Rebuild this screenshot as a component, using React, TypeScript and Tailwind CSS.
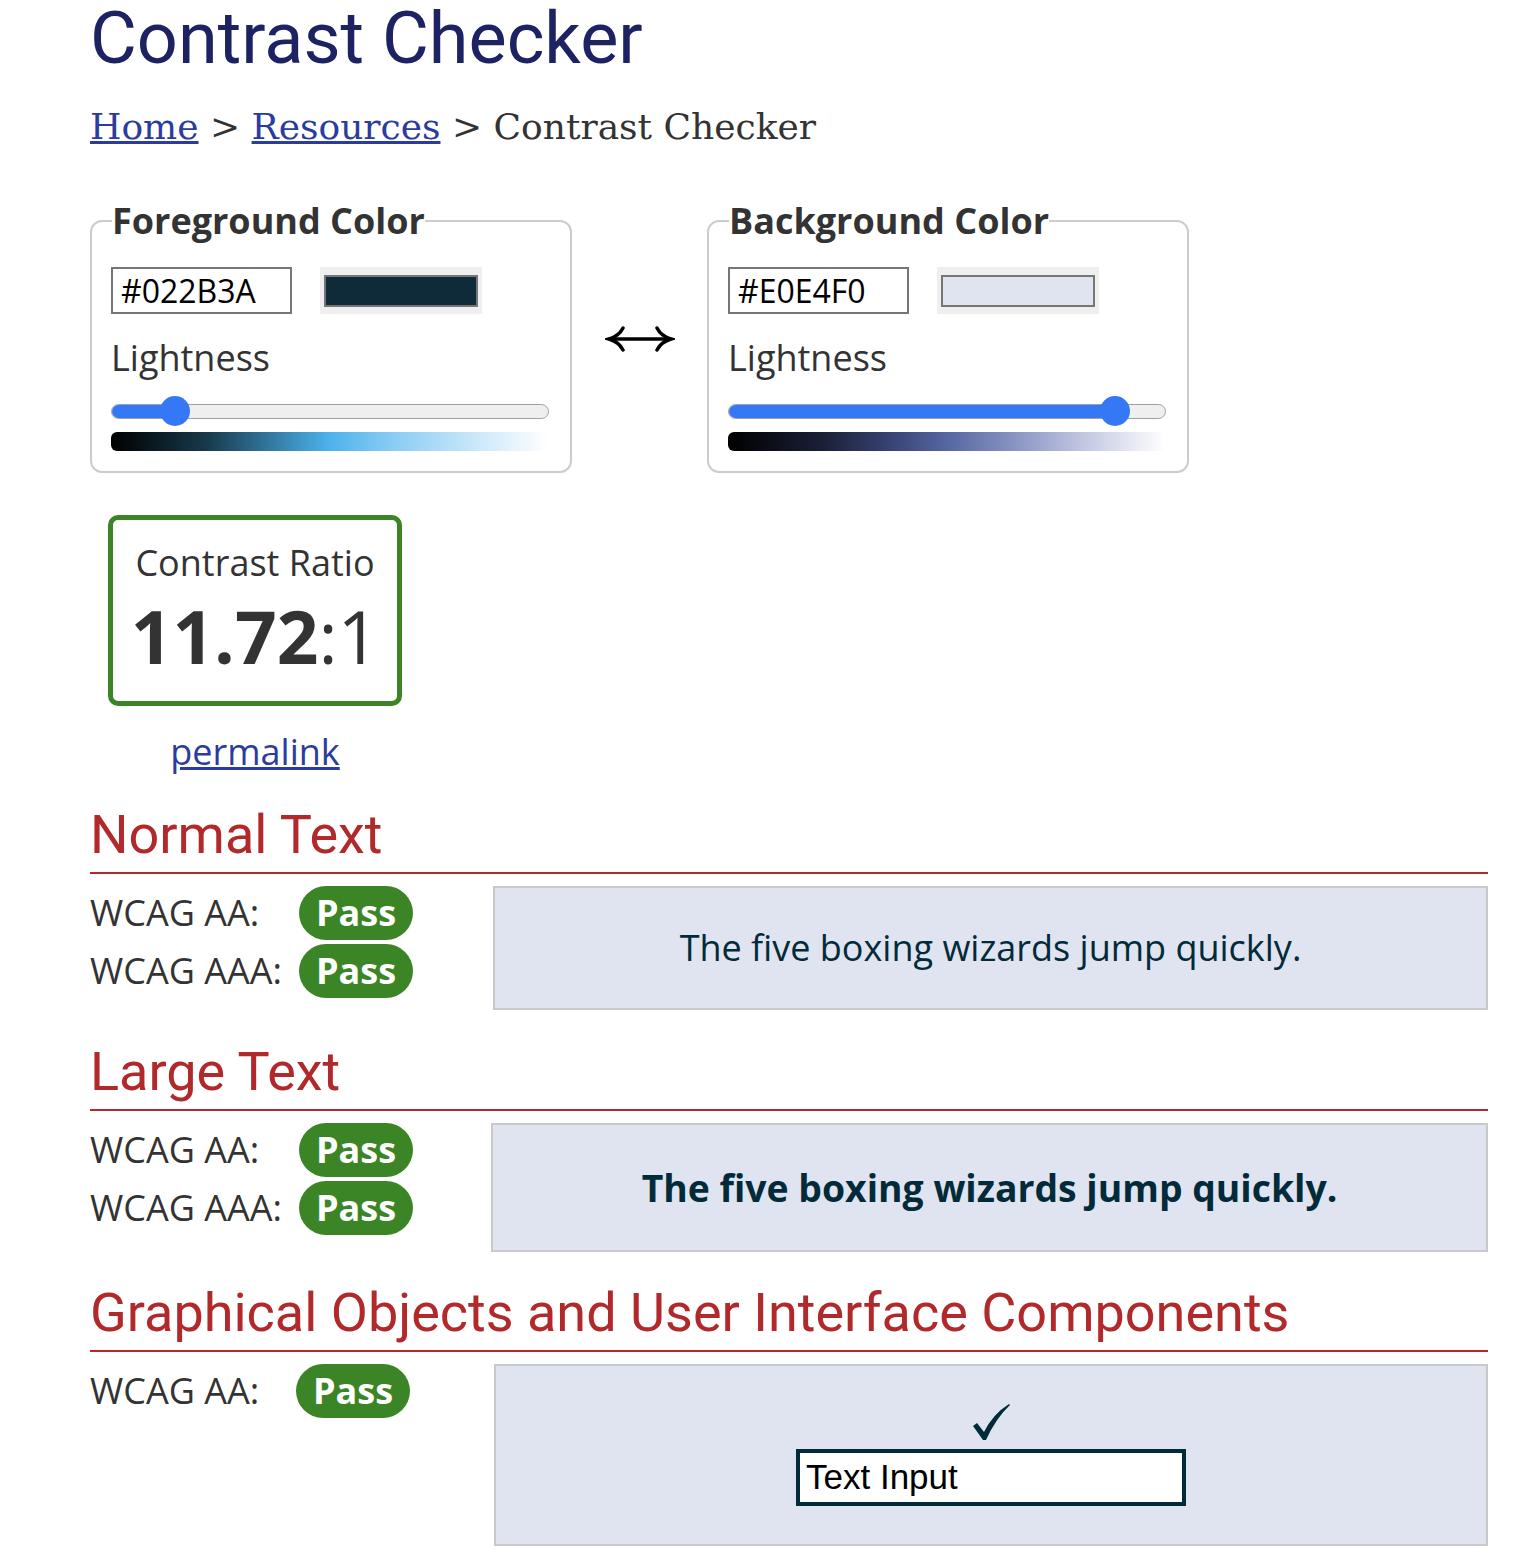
import React from "react";

const OPEN = { fontFamily: '"Open Sans", "Liberation Sans", sans-serif' };
const ROBOTO = { fontFamily: 'Roboto, "Liberation Sans", sans-serif' };
const SERIF = { fontFamily: '"DejaVu Serif", "Liberation Serif", serif' };

function ColorBox({
  title,
  hex,
  swatch,
  value,
  gradient,
}: {
  title: string;
  hex: string;
  swatch: string;
  value: number;
  gradient: string;
}) {
  return (
    <fieldset className="w-[482px] border-2 border-[#cccccc] rounded-[12px] px-[19px] pb-[20px]">
      <legend className="text-[36px] font-bold text-[#333333] leading-[49px] px-0 ml-[1px]" style={OPEN}>
        {title}
      </legend>
      <div className="flex items-center gap-[28px] mt-[22px]">
        <div
          className="w-[181px] h-[47px] border-2 border-[#767676] flex items-center pl-[8px] text-[32px] text-black"
          style={OPEN}
        >
          {hex}
        </div>
        <div className="w-[162px] h-[47px] bg-[#efefef] flex items-center justify-center">
          <div className="w-[154px] h-[32px] border-2 border-[#767676]" style={{ backgroundColor: swatch }} />
        </div>
      </div>
      <div className="mt-[19px] text-[36px] leading-[49px] text-[#333333]" style={OPEN}>
        Lightness
      </div>
      <div className="relative mt-[14px] h-[30px] w-[438px] flex items-center">
        <div className="w-full h-[15px] rounded-full bg-[#efefef] border border-[#a0a0a0] overflow-hidden">
          <div className="h-full bg-[#3478f6]" style={{ width: `${value}%` }} />
        </div>
        <div
          className="absolute top-0 w-[30px] h-[30px] rounded-full bg-[#3478f6]"
          style={{ left: `calc(${value}% - 15px)` }}
        />
      </div>
      <div className="mt-[6px] h-[19px] w-[437px] rounded-l-[6px]" style={{ background: gradient }} />
    </fieldset>
  );
}

function Pill() {
  return (
    <span
      className="inline-flex items-center justify-center w-[114px] h-[54px] rounded-full bg-[#3b8526] text-white font-bold text-[36px]"
      style={OPEN}
    >
      Pass
    </span>
  );
}

function Row({ label }: { label: string }) {
  return (
    <div className="flex items-center h-[54px]">
      <span className="w-[209px] text-[36px] text-[#333333]" style={OPEN}>
        {label}
      </span>
      <Pill />
    </div>
  );
}

function SectionHeading({ children }: { children: React.ReactNode }) {
  return (
    <div className="border-b-2 border-[#b2292b]">
      <h2 className="text-[54px] leading-[66px] text-[#b2292b] pb-[4px] pt-[2px]" style={ROBOTO}>
        {children}
      </h2>
    </div>
  );
}

export default function App() {
  return (
    <div className="bg-white min-h-[1562px] w-[1518px] overflow-hidden pl-[90px] pr-[30px]" style={OPEN}>
      <h1 className="text-[72px] leading-[78px] text-[#1d2362]" style={ROBOTO}>
        Contrast Checker
      </h1>
      <nav className="mt-[27px] text-[36px] leading-[44px] text-[#333333]" style={SERIF}>
        <a className="text-[#2b3c9e] underline" href="#">
          Home
        </a>{" "}
        &gt;{" "}
        <a className="text-[#2b3c9e] underline" href="#">
          Resources
        </a>{" "}
        &gt; Contrast Checker
      </nav>

      <div className="flex items-center mt-[47px]">
        <ColorBox
          title="Foreground Color"
          hex="#022B3A"
          swatch="#0f2a38"
          value={14.6}
          gradient="linear-gradient(to right, #000000 0%, #173a4c 22%, #3a88b5 40%, #4db2ec 50%, #8ccdf4 65%, #cfeafb 85%, #ffffff 100%)"
        />
        <div className="w-[135px] flex justify-center mt-[8px]">
          <svg width="70" height="28" viewBox="0 0 70 28">
            <path d="M6 14 H64" stroke="#000" strokeWidth="3.5" fill="none" />
            <path d="M18 3 Q14 11 4 14 Q14 17 18 25" stroke="#000" strokeWidth="3.5" fill="none" strokeLinecap="round" />
            <path d="M52 3 Q56 11 66 14 Q56 17 52 25" stroke="#000" strokeWidth="3.5" fill="none" strokeLinecap="round" />
          </svg>
        </div>
        <ColorBox
          title="Background Color"
          hex="#E0E4F0"
          swatch="#E0E4F0"
          value={88.3}
          gradient="linear-gradient(to right, #000000 0%, #1b2038 22%, #3a4577 38%, #5566a0 50%, #8892c2 65%, #c4c9e3 82%, #ffffff 100%)"
        />
      </div>

      <div className="ml-[18px] mt-[42px] w-[294px]">
        <div className="border-[5px] border-[#3b8526] rounded-[10px] h-[191px] flex flex-col items-center">
          <div className="mt-[18px] text-[36px] leading-[49px] text-[#333333]">Contrast Ratio</div>
          <div className="mt-[4px] text-[73px] leading-[90px] text-[#333333]">
            <span className="font-bold">11.72</span>
            <span>:1</span>
          </div>
        </div>
        <div className="text-center mt-[21px] text-[36px] leading-[49px]">
          <a href="#" className="text-[#2b3c9e] underline">
            permalink
          </a>
        </div>
      </div>

      <div className="mt-[24px]">
        <SectionHeading>Normal Text</SectionHeading>
        <div className="flex mt-[12px]">
          <div className="w-[403px] flex flex-col gap-[4px]">
            <Row label="WCAG AA:" />
            <Row label="WCAG AAA:" />
          </div>
          <div className="flex-1 h-[124px] bg-[#E0E4F0] border-2 border-[#c9c9c9] flex items-center justify-center text-[36px] text-[#022B3A]">
            The five boxing wizards jump quickly.
          </div>
        </div>
      </div>

      <div className="mt-[27px]">
        <SectionHeading>Large Text</SectionHeading>
        <div className="flex mt-[12px]">
          <div className="w-[401px] flex flex-col gap-[4px]">
            <Row label="WCAG AA:" />
            <Row label="WCAG AAA:" />
          </div>
          <div className="flex-1 h-[129px] bg-[#E0E4F0] border-2 border-[#c9c9c9] flex items-center justify-center text-[37.33px] font-bold text-[#022B3A]">
            The five boxing wizards jump quickly.
          </div>
        </div>
      </div>

      <div className="mt-[26px]">
        <SectionHeading>Graphical Objects and User Interface Components</SectionHeading>
        <div className="flex mt-[12px]">
          <div className="w-[404px] flex flex-col">
            <div className="flex items-center h-[54px]">
              <span className="w-[206px] text-[36px] text-[#333333]">WCAG AA:</span>
              <Pill />
            </div>
          </div>
          <div className="flex-1 h-[182px] bg-[#E0E4F0] border-2 border-[#c9c9c9] flex flex-col items-center justify-center">
            <svg width="38" height="38" viewBox="0 0 38 38" className="mt-[-1px]">
              <path
                d="M1 23 L5 20 L12 29 Q21 11 37 1 L38 2 Q24 15 14 37 L11 37 Z"
                fill="#022B3A"
              />
            </svg>
            <div
              className="mt-[8px] w-[390px] h-[57px] border-4 border-[#022B3A] bg-white flex items-center pl-[6px] text-[35px] text-black"
              style={{ fontFamily: '"Liberation Sans Narrow", "Liberation Sans", Arial, sans-serif' }}
            >
              Text Input
            </div>
          </div>
        </div>
      </div>
    </div>
  );
}
